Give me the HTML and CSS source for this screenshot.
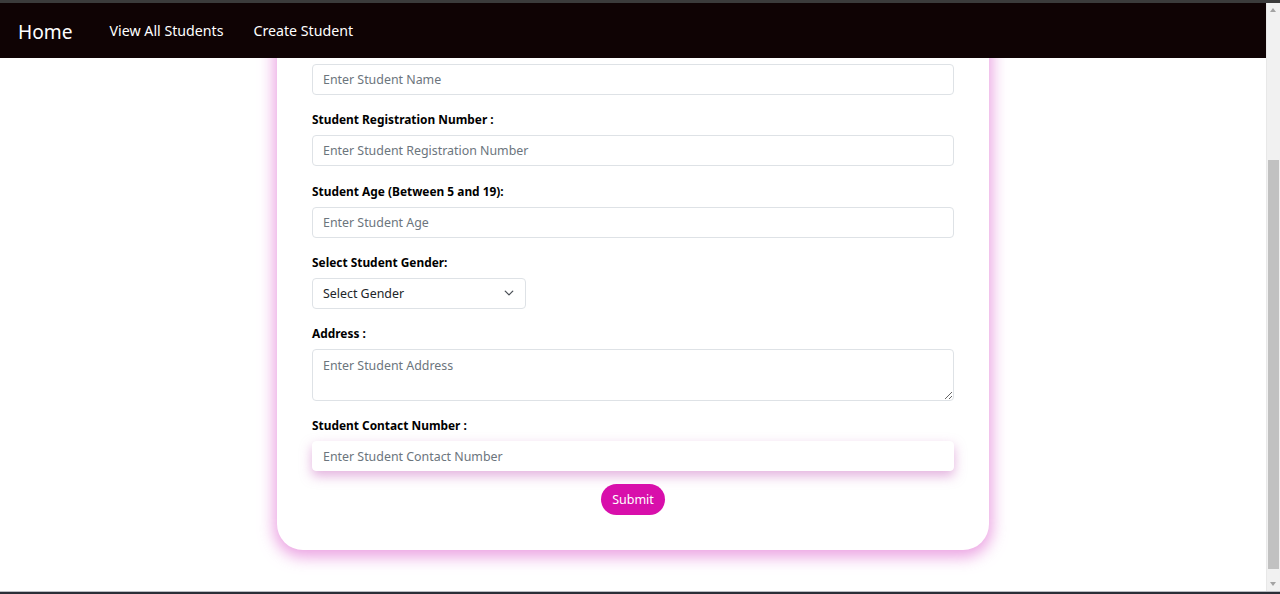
FILE: index.html
```html
<!DOCTYPE html>
<html lang="en">
<head>
<meta charset="utf-8">
<title>Create Student</title>
<link rel="stylesheet" href="styles.css">
</head>
<body>
<div class="frame">
  <div class="top-strip"></div>
  <div class="viewport">
    <div class="page">
      <nav class="navbar">
        <a class="brand" href="#">Home</a>
        <a class="nav-link" href="#">View All Students</a>
        <a class="nav-link" href="#">Create Student</a>
      </nav>
      <div class="content">
        <form class="card">
          <div class="field">
            <input class="control" type="text" placeholder="Enter Student Name" aria-label="Student Name">
          </div>
          <div class="field">
            <label class="label">Student Registration Number :</label>
            <input class="control" type="text" placeholder="Enter Student Registration Number">
          </div>
          <div class="field field-shift">
            <label class="label">Student Age (Between 5 and 19):</label>
            <input class="control" type="text" placeholder="Enter Student Age">
          </div>
          <div class="field">
            <label class="label">Select Student Gender:</label>
            <div class="select-wrap">
              <select class="control select">
                <option>Select Gender</option>
                <option>Male</option>
                <option>Female</option>
              </select>
              <svg class="chevron" width="10" height="10" viewBox="0 0 16 16"><path d="M2 5l6 6 6-6" fill="none" stroke="#4a4f55" stroke-width="2" stroke-linecap="round" stroke-linejoin="round"/></svg>
            </div>
          </div>
          <div class="field">
            <label class="label">Address :</label>
            <textarea class="control area" placeholder="Enter Student Address"></textarea>
          </div>
          <div class="field">
            <label class="label">Student Contact Number :</label>
            <input class="control focused" type="text" placeholder="Enter Student Contact Number">
          </div>
          <div class="actions">
            <button class="submit" type="button">Submit</button>
          </div>
        </form>
      </div>
    </div>
    <div class="scrollbar">
      <div class="arrow up"></div>
      <div class="track">
        <div class="thumb"></div>
      </div>
      <div class="arrow down"></div>
    </div>
  </div>
  <div class="bottom-strip"></div>
</div>
</body>
</html>
```

FILE: styles.css
```css
* { box-sizing: border-box; }
html, body { margin: 0; padding: 0; }
body {
  width: 1280px;
  height: 594px;
  overflow: hidden;
  background: #ffffff;
  font-family: "Noto Sans", "Open Sans", sans-serif;
}
.frame {
  display: flex;
  flex-direction: column;
  height: 594px;
}
.top-strip {
  height: 3px;
  background: #3b3b3b;
  flex: none;
}
.bottom-strip {
  height: 3px;
  border-top: 1px solid #b9bcc2;
  background: #2a2e37;
  flex: none;
}
.viewport {
  flex: 1;
  display: flex;
  min-height: 0;
}
.page {
  flex: 1;
  position: relative;
  overflow: hidden;
  background: #ffffff;
}
.navbar {
  position: absolute;
  top: 0;
  left: 0;
  right: 0;
  height: 55px;
  background: #0f0304;
  display: flex;
  align-items: center;
  padding-left: 18px;
  z-index: 5;
}
.brand {
  color: #ffffff;
  text-decoration: none;
  font-size: 19.2px;
  margin-right: 37px;
  margin-top: 1px;
}
.nav-link {
  color: #ffffff;
  text-decoration: none;
  font-size: 14.2px;
  margin-right: 30px;
  margin-top: -1px;
}
.content {
  display: flex;
  justify-content: center;
  margin-top: 15px;
}
.card {
  width: 712px;
  background: #ffffff;
  border-radius: 26px;
  padding: 46px 35px 35px;
  box-shadow: 0 4px 15px 3px rgba(222, 105, 208, 0.62);
}
.field {
  margin-bottom: 14px;
}
.field-shift {
  padding-top: 1px;
}
.label {
  display: block;
  font-size: 11.9px;
  font-weight: 700;
  line-height: 21px;
  margin-bottom: 5px;
  color: #000000;
}
.control {
  display: block;
  width: 100%;
  height: 31px;
  border: 1px solid #dee2e6;
  border-radius: 4px;
  padding: 0 10px;
  font-family: inherit;
  font-size: 12.4px;
  color: #212529;
  background: #ffffff;
  outline: none;
}
.control::placeholder {
  color: #6c757d;
}
.select-wrap {
  position: relative;
  width: 214px;
}
.select {
  appearance: none;
  -webkit-appearance: none;
  color: #212529;
}
.chevron {
  position: absolute;
  right: 12px;
  top: 10px;
  pointer-events: none;
}
.area {
  height: 52px;
  padding-top: 7px;
  resize: vertical;
}
.focused {
  height: 30px;
  border-color: #ffffff;
  box-shadow: 0 5px 12px rgba(200, 100, 190, 0.5);
}
.actions {
  display: flex;
  justify-content: center;
  margin-top: -1px;
}
.submit {
  height: 31px;
  width: 64px;
  border: none;
  border-radius: 16px;
  background: #d80fab;
  color: #ffffff;
  font-family: inherit;
  font-size: 12.5px;
  padding: 0;
}
.scrollbar {
  width: 14px;
  flex: none;
  background: #f1f1f1;
  display: flex;
  flex-direction: column;
  border-left: 1px solid #e8e8e8;
}
.arrow {
  height: 14px;
  flex: none;
  position: relative;
}
.arrow.up::after,
.arrow.down::after {
  content: "";
  position: absolute;
  left: 3px;
  border-left: 3.5px solid transparent;
  border-right: 3.5px solid transparent;
}
.arrow.up::after {
  top: 5px;
  border-bottom: 4px solid #a3a3a3;
}
.arrow.down::after {
  top: 5px;
  border-top: 4px solid #a3a3a3;
}
.track {
  flex: 1;
  padding: 143px 1px 8px 1px;
  display: flex;
}
.thumb {
  flex: 1;
  background: #c1c1c1;
}
```
